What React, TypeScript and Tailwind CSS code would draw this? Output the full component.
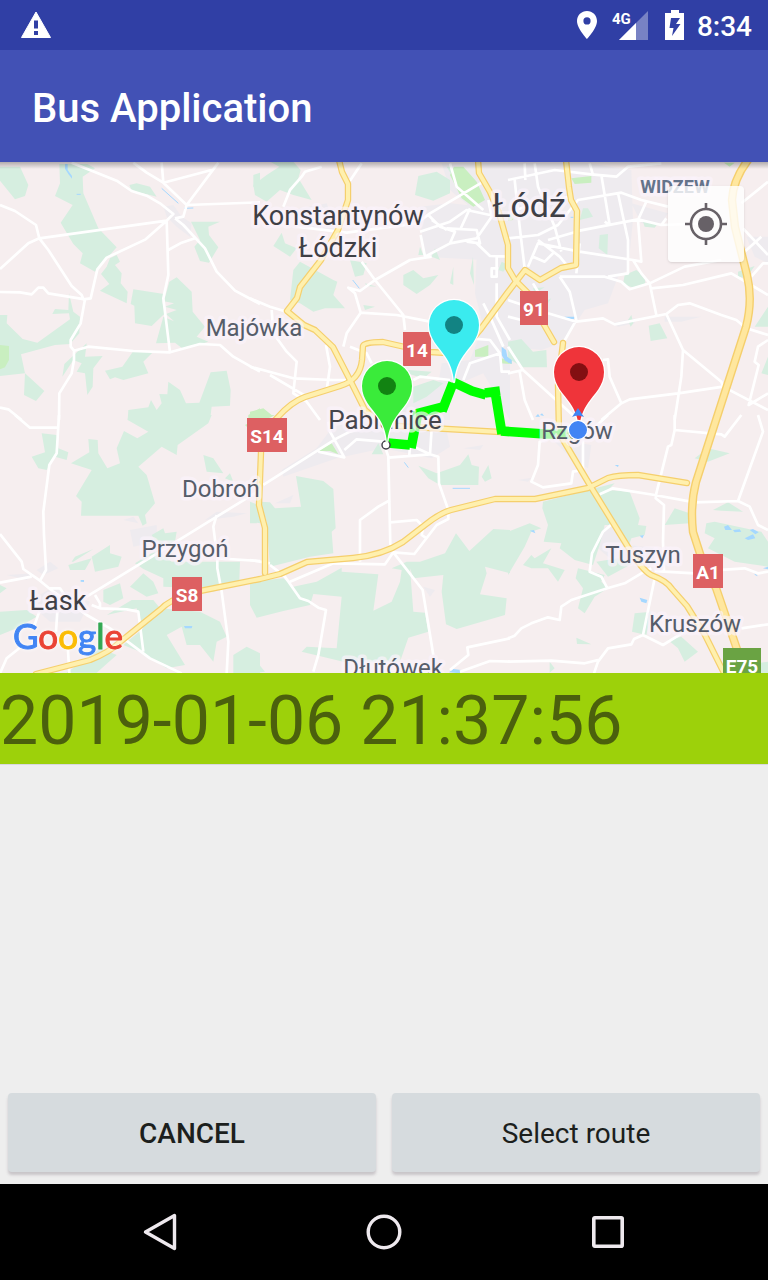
import React from "react";

type Tile = {
  x: number;
  y: number;
  urban: string;
  forest: string;
  park: string;
  lake: string;
  stream: string;
  street: string;
};

// Every tile is drawn in its own 780-unit square, three units to a map pixel.
const tiles: Tile[] = [
  {
    x: 0,
    y: 160,
    urban: "M490,140 520,135 545,170 575,190 570,230 530,200 500,170Z",
    forest:
      "M0,20 60,20 85,75 75,108 45,118 0,62Z M178,12 262,12 285,25 248,50 250,100 295,205 350,262 285,335 240,310 248,280 220,252 182,188 218,135 165,108 180,70Z M350,285 360,305 345,315 365,340 362,370 383,395 380,430 300,392 328,372 303,342 320,320 330,295Z M388,75 410,70 450,80 470,110 450,105 395,92Z M573,185 660,185 625,200 627,225 655,262 627,308 600,303 583,260 600,240Z M400,388 492,402 487,425 495,460 455,498 405,490 403,437 392,432Z M508,365 530,352 575,395 578,455 615,500 590,530 625,545 550,568 525,548 468,550 490,470 522,484 498,462 530,450 495,440 522,430 492,424Z M0,465 22,465 20,490 68,537 112,548 210,478 207,460 157,462 165,447 205,450 207,400 220,455 240,470 238,520 210,552 165,555 63,583 75,640 0,648Z M75,640 133,693 108,723 72,705Z M187,650 193,612 260,550 255,590 308,588 280,625 278,680 262,705 255,640 230,635 245,610 220,600Z M400,573 460,575 430,605 445,640 370,660 345,652 330,658 315,632 367,620Z M632,637 680,632 692,690 690,737 635,740 632,765 600,780 383,780 385,750 445,742 453,720 470,750 485,730 478,702 502,703 505,665 540,690 558,730 598,728Z M760,45 780,38 780,95 760,80Z",
    park: "M0,555 27,558 27,600 15,622 0,628Z M745,765 780,745 780,780 745,780Z",
    lake: "M195,12 203,12 203,30 216,48 216,56 205,42 195,26Z",
    stream: "M485,85 535,130 M230,103 242,103 M552,145 580,144",
    street:
      "M215,8 350,62 395,93 440,107 480,130 520,162 500,182 437,238 320,293 292,328 272,415 250,418 245,405 215,378 145,270 118,235 108,195 45,153 0,135 M0,327 85,250 118,235 500,182 505,345 490,415 510,577 400,573 265,560 222,572 212,560 212,540 242,490 255,418 145,400 130,383 115,383 95,403 60,397 0,396 M525,175 550,195 615,265 650,335 705,392 780,432 M505,270 545,248 585,235 M525,175 550,170 560,135 780,127 M560,135 490,68 485,8 M490,68 440,38 400,8 M490,68 635,30 M560,135 655,8 M510,577 600,552 660,555 700,590 780,635 M222,572 222,600 215,640 178,700 177,780 M0,743 25,748 65,780",
  },
  {
    x: 250,
    y: 160,
    urban:
      "M130,150 230,130 260,215 160,205Z M510,140 600,130 700,140 780,300 700,300 520,290Z M575,10 780,10 780,300 700,150 660,140 600,90Z M680,290 780,250 780,780 700,640 560,700 575,610 660,600 700,500 675,400Z M360,730 600,660 600,780 360,780Z",
    forest:
      "M10,75 50,45 88,20 60,5 130,5 152,30 145,55 185,120 130,105 90,90 50,125 15,105Z M505,48 560,35 600,60 600,100 550,122 495,105Z M95,218 105,250 140,265 120,290 70,258Z M150,305 250,360 262,365 250,405 285,445 225,445 190,455 150,430 120,420 130,330Z M300,300 350,310 340,345 315,350Z M460,345 490,330 520,355 565,345 540,375 500,402 460,375Z M340,435 375,440 345,450Z M510,260 520,285 505,285Z M555,265 570,300 545,290Z M610,320 610,375 600,370Z M669,290 672,375 660,340Z M475,630 545,635 520,655 470,640Z M490,680 550,660 580,670 530,710 490,730Z M755,305 775,315 760,335 745,330Z M345,370 380,380 350,378Z M590,20 602,20 605,45Z",
    park: "M600,45 612,20 640,20 680,65 705,120 670,140 635,115Z M675,570 715,555 715,590 675,590Z M750,595 785,600 785,612 750,610Z M0,755 40,745 65,765 50,780 0,780Z",
    lake: "M755,560 768,570 772,590 785,600 785,612 765,602 755,585Z",
    stream: "M308,360 328,385",
    street:
      "M215,20 165,35 155,50 120,90 100,140 M335,10 300,62 M140,200 290,218 500,190 540,160 700,65 M510,215 600,185 650,150 720,165 M512,225 525,290 600,250 680,235 725,170 715,120 M535,165 570,200 615,215 600,250 M590,205 680,210 690,250 650,245 M545,180 590,210 M660,145 630,210 M680,250 720,288 780,290 M545,290 480,300 375,360 330,393 295,383 315,400 332,458 290,520 280,560 M335,305 375,360 460,465 465,510 M330,458 440,465 540,485 M0,415 60,440 110,455 M65,450 70,520 110,575 140,605 130,700 170,725 210,780 M0,620 130,655 250,660 300,660 M60,645 170,710 M228,555 240,620 230,690 M300,560 350,580 365,610 M490,660 510,650 600,660 M640,660 660,610 750,580 720,540 660,535 M740,290 740,350 725,350 725,325 745,325 M600,10 620,80 700,150 M700,430 720,470 760,560 M750,580 755,635 780,635 M740,370 740,470 780,540",
  },
  {
    x: 508,
    y: 160,
    urban:
      "M0,8 230,8 370,30 375,180 360,330 330,350 300,430 230,450 210,480 170,545 100,570 0,560Z M470,470 580,470 520,485 470,485Z M370,130 480,160 460,190 400,190Z M310,490 380,475 380,490 330,500Z M715,230 780,230 780,310 740,290Z",
    forest:
      "M225,145 240,145 255,170 215,180Z M275,225 300,222 298,285 272,265Z M350,345 385,330 410,350 412,370 380,385 345,372Z M422,497 455,490 478,535 428,543Z M0,545 40,537 75,575 115,570 117,622 45,622 0,595Z M740,500 780,440 780,500Z M690,335 740,318 715,355 690,350Z M405,185 450,190 440,203 410,200Z M360,480 370,465 376,490 368,500Z M760,640 780,590 780,645Z M75,385 110,382 80,400Z M100,430 130,415 120,430Z",
    park: "M190,55 250,48 250,68 200,72Z M648,8 680,8 665,20Z M0,155 18,160 15,180 0,182Z",
    lake: "M170,470 200,470 198,477 172,477Z M0,597 8,605 0,609Z M82,770 90,762 96,770Z M96,765 102,760 108,768Z",
    stream: "M188,172 196,172",
    street:
      "M20,60 35,200 50,325 M50,10 52,60 M80,10 90,80 140,200 160,275 M0,60 140,30 250,43 325,50 360,20 460,10 M0,235 90,225 150,195 210,120 340,98 400,120 480,140 M0,160 90,125 190,110 M120,240 215,212 390,178 460,195 600,190 M60,320 90,250 215,275 375,300 400,305 390,180 415,125 M245,10 255,45 M280,45 305,195 290,185 M330,100 360,240 360,340 300,350 M90,240 155,290 180,320 M75,290 110,305 140,275 M155,350 290,350 340,365 365,388 425,370 530,320 640,300 M155,350 185,395 205,480 165,550 M205,340 215,250 M0,420 60,440 M0,470 40,480 M120,460 205,485 285,475 320,493 475,462 510,435 545,430 640,465 685,480 715,505 780,525 M375,300 400,340 425,370 445,465 M430,385 525,375 670,340 780,405 M475,462 525,570 640,665 645,680 510,700 365,718 340,730 280,780 M645,680 780,750 M525,570 520,650 500,780 M340,730 305,650 300,598 285,600 M0,560 45,630 200,770 M45,630 0,640 M35,635 50,720 75,780 M700,130 780,65 M460,195 475,175 M705,205 780,285 M705,280 760,230 M780,310 765,310 730,350 M780,540 750,560 740,605 752,615 722,735 780,700 M75,370 105,420",
  },
  {
    x: 0,
    y: 415,
    urban:
      "M85,560 160,515 270,560 240,620 150,620Z M370,315 400,305 415,325Z M390,345 470,330 470,380 400,395Z M615,315 650,290 740,295 700,305Z M110,465 150,440 175,460 130,480Z M20,480 100,475 80,495Z",
    forest:
      "M385,0 635,0 625,25 533,90 530,120 485,95 415,155 440,180 465,265 435,300 440,325 428,332 415,302 243,302 245,260 228,243 275,165 213,145 268,112 265,72 293,75 295,115 322,160 360,145 350,100 372,48 412,70 445,50 383,15Z M125,55 170,60 175,100 205,112 200,135 165,125 140,165 115,160 95,125 135,112Z M610,120 640,130 670,175 620,170Z M675,190 690,175 700,200Z M780,255 750,320 780,325Z M215,440 225,425 280,402 220,440Z M205,450 275,430 255,465 210,465Z M275,425 330,390 330,415 365,425 355,455 285,470Z M405,445 470,405 515,440 720,440 718,495 640,530 600,520 490,515 490,490 430,462Z M430,475 460,500 475,535 440,545 390,515Z M310,525 360,505 370,550 330,570 310,560Z M395,555 460,555 480,580 600,590 660,620 680,665 650,680 640,740 600,690 560,690 545,635 500,660 555,750 500,760 420,710 370,690 430,640 410,580 320,600Z M0,590 80,585 110,605 50,640 0,660Z M700,720 740,695 780,715 780,775 700,775Z M0,510 20,520 0,535Z M455,360 490,340 495,355 530,350 525,380 480,400Z M300,700 350,720 290,773 200,773 260,730Z",
    park: "M735,30 745,25 745,40Z M765,0 780,0 780,10Z",
    lake: "M242,495 252,495 252,501 242,500Z M552,633 577,633 575,640 555,640Z",
    stream: "",
    street:
      "M177,0 170,115 148,150 130,290 132,360 138,465 120,497 M45,0 90,38 175,38 M0,357 65,440 70,462 120,497 160,530 260,600 330,640 450,730 545,775 M0,503 95,485 M260,545 480,410 720,262 780,225 M275,570 300,580 380,583 415,590 430,710 M650,300 640,335 652,430 652,460 665,530 685,680 680,775 M652,430 780,438 M285,540 300,565 300,580 M172,590 168,650 M118,590 100,640 M0,775 20,730 70,690 M203,690 208,775 M150,520 180,520 200,550",
  },
  {
    x: 250,
    y: 415,
    urban:
      "M260,20 580,0 600,95 545,130 400,100 260,130 100,185 95,165 200,100Z M520,515 555,525 540,545Z M640,100 700,90 690,105Z M75,265 130,240 120,265Z",
    forest:
      "M138,183 220,198 250,222 257,340 245,350 250,415 180,425 60,455 50,320 30,260 60,262 75,280 153,275Z M0,500 100,490 130,515 200,500 275,458 275,470 385,478 370,587 425,560 450,500 455,465 425,460 470,440 510,440 585,415 618,355 658,408 730,342 780,345 780,475 705,455 710,475 690,538 770,550 765,600 620,642 588,628 575,530 580,480 490,490 480,460 490,590 525,593 535,650 475,668 450,740 280,740 155,710 170,695 260,700 275,545 190,537 180,570 100,588 20,608 0,570Z M505,152 560,175 630,150 655,118 665,150 687,155 685,210 570,210 535,190Z M695,185 715,150 725,190 705,200Z M385,85 400,118 365,118Z M0,260 25,270 20,325 0,325Z M0,715 45,770 0,775Z",
    park: "M205,108 245,85 265,118 240,108Z M0,0 75,0 60,8 0,8Z",
    lake: "M597,772 610,762 633,765 630,775Z",
    stream: "M463,142 475,158 M608,220 660,220",
    street:
      "M40,210 260,70 300,50 380,30 M205,110 283,127 240,50 235,20 M283,105 320,73 400,80 415,125 421,390 M415,128 540,118 565,125 567,205 595,285 595,312 560,330 493,417 430,412 M540,118 545,40 M478,120 480,90 540,118 M421,255 385,275 330,315 330,440 M421,322 500,315 520,335 515,360 530,370 M120,500 250,445 405,448 430,412 518,525 550,720 M0,435 60,445 M60,450 105,485 150,550 175,558 205,578 228,585 205,720 190,770 M780,670 652,697 655,720 600,765 M630,770 720,738 780,740",
  },
  {
    x: 508,
    y: 415,
    urban:
      "M280,340 320,330 360,390 450,400 440,450 330,450 270,400Z M130,70 250,90 240,160 200,140Z M30,195 70,188 60,200Z",
    forest:
      "M105,260 240,225 320,205 300,225 365,230 395,310 390,330 415,333 410,360 370,370 360,400 330,330 290,330 275,390 255,450 200,435 155,400 160,385 107,380 120,330 103,280Z M265,440 330,430 375,445 300,485Z M210,460 290,480 280,500 300,520 260,545 230,595 210,580 225,520 203,490Z M0,350 65,325 100,340 70,350 50,395 0,480Z M600,100 665,115 600,140 560,130Z M470,330 500,280 545,295 560,300 545,325Z M595,325 620,320 760,350 780,380 780,455 680,440 600,400 620,370 590,355Z M615,285 660,262 705,290 640,287Z M380,595 430,590 415,660 372,650Z M480,675 520,665 570,710 530,740 510,700Z M205,668 250,688 207,687Z M125,740 140,760 125,773Z M45,450 70,420 80,430 130,400 105,445 170,465 150,500 120,460 70,460Z M745,745 780,740 780,775 745,775Z",
    park: "",
    lake: "M648,335 660,330 672,345 652,345Z M675,345 695,343 700,350 680,352Z M725,345 735,342 752,352 742,358Z M710,370 735,358 742,370 720,375Z M65,347 78,345 82,355Z M395,548 418,555 415,565 400,560Z M395,362 408,360 403,370Z M320,150 332,150 330,156Z M765,460 780,455 780,463Z",
    stream: "M740,478 748,482",
    street:
      "M500,0 500,45 490,90 480,95 445,235 443,250 468,270 465,380 468,470 560,475 M440,468 468,470 M560,470 710,460 750,475 780,470 M275,238 315,220 440,240 560,262 690,258 725,275 750,330 780,345 M750,0 765,50 690,258 M500,45 640,58 650,65 700,0 M315,325 285,350 252,415 245,470 280,485 298,520 350,505 400,475 430,460 M298,520 190,555 160,575 155,615 120,607 70,625 40,640 20,662 0,670 M440,490 405,660 465,690 530,650 M405,660 378,672 370,688 300,700 270,740 M270,735 230,745 130,737 0,740 M270,740 258,775 M700,640 780,628 M155,60 95,80 90,150 70,200 105,217 190,205 195,170 225,165 225,70 300,0",
  },
];

const mainRoads = [
  "M339,160 L342,172 L348,184 L348,200 L338,230 L321,260 L300,287 L297,298 L287,311 L304,325 L315,330 L333,347 L350,380 L365,410 L383,425 L430,428 L500,432 L558,434",
  "M265,573 V528 L259,505 L261,452 Q264,430 277,418 Q291,402 305,397 L340,386 Q360,380 362,360 L363,346 Q364,342 383,342 L405,347 L430,352 L447,353",
  "M478,160 L479,173 L490,192 L499,213 L508,245 V268 L515,280 L530,295 L543,323 L554,342",
  "M566,160 L569,187 L571,200 L577,211 L576,265 L561,268 L540,280 L525,270 L508,292 L480,330 L465,348",
  "M563,343 L558,385 L559,433 L591,487 L628,547 Q642,570 651,575 Q667,581 672,589 L687,606 L705,635 L725,675",
  "M36,674 L90,660 Q110,652 120,642 L161,609 Q168,601 190,593 L260,579 L280,574 L307,562 L353,558 Q383,555 403,542 L425,525 Q440,513 451,510 L495,499 L535,499 L588,488 L608,478 Q618,475 638,475 L687,483",
];

const motorway =
  "M748,160 Q733,180 732,200 L735,227 L747,275 Q753,300 746,327 L716,420 L696,482 Q690,505 693,532 L703,563 L716,588 L740,658";

const places = [
  { name: "Konstantynów", x: 338, y: 225, cls: "fill-[#3f3f46] text-[27px]" },
  { name: "Łódzki", x: 338, y: 257, cls: "fill-[#3f3f46] text-[27px]" },
  { name: "Łódź", x: 529, y: 217, cls: "fill-[#3f3f46] text-[34px]" },
  { name: "Pabianice", x: 385, y: 429, cls: "fill-[#45454c] text-[26px]" },
  { name: "Łask", x: 58, y: 610, cls: "fill-[#3f3f46] text-[27px]" },
  { name: "Majówka", x: 254, y: 336, cls: "fill-[#565d6a] text-[24px]" },
  { name: "Rzgów", x: 577, y: 439, cls: "fill-[#565d6a] text-[24px]" },
  { name: "Dobroń", x: 221, y: 497, cls: "fill-[#565d6a] text-[24px]" },
  { name: "Przygoń", x: 185, y: 557, cls: "fill-[#565d6a] text-[24px]" },
  { name: "Tuszyn", x: 643, y: 563, cls: "fill-[#565d6a] text-[24px]" },
  { name: "Kruszów", x: 695, y: 632, cls: "fill-[#565d6a] text-[24px]" },
  { name: "Dłutówek", x: 393, y: 676, cls: "fill-[#565d6a] text-[24px]" },
  { name: "WIDZEW", x: 675, y: 193, cls: "fill-[#64748b] text-[18px] font-bold" },
];

const shields = [
  { name: "14", x: 403, y: 332, w: 28, fill: "#dd6062" },
  { name: "91", x: 520, y: 291, w: 28, fill: "#dd6062" },
  { name: "S14", x: 247, y: 418, w: 40, fill: "#dd6062" },
  { name: "S8", x: 172, y: 577, w: 30, fill: "#dd6062" },
  { name: "A1", x: 693, y: 554, w: 30, fill: "#dd6062" },
  { name: "E75", x: 723, y: 648, w: 38, fill: "#6aa343" },
];

const pins = [
  { x: 454, y: 325, fill: "#3aebef", dot: "#128383" },
  { x: 387, y: 386, fill: "#3aeb3a", dot: "#128312" },
  { x: 579, y: 372, fill: "#ef343a", dot: "#830f12" },
];

function Layer({ part, fill, stroke, width }: { part: "urban" | "forest" | "park" | "lake" | "stream" | "street"; fill?: string; stroke?: string; width?: number }) {
  return (
    <g fill={fill ?? "none"} stroke={stroke} strokeWidth={width} strokeLinejoin="round">
      {tiles.map((t) => (
        <path key={`${t.x}-${t.y}`} transform={`translate(${t.x} ${t.y}) scale(0.33333)`} d={t[part]} />
      ))}
    </g>
  );
}

function RouteMap() {
  return (
    <svg viewBox="0 162 768 511" preserveAspectRatio="xMidYMid slice" className="block h-full w-full" role="img" aria-label="Bus route map">
      <defs>
        <linearGradient id="barShadow" x1="0" y1="0" x2="0" y2="1">
          <stop offset="0" stopColor="#000" stopOpacity="0.28" />
          <stop offset="1" stopColor="#000" stopOpacity="0" />
        </linearGradient>
      </defs>
      <rect x="0" y="162" width="768" height="511" fill="#f6eeef" />
      <Layer part="urban" fill="#eeebef" />
      <Layer part="forest" fill="#d6eee0" />
      <Layer part="park" fill="#c9efc0" />
      <Layer part="lake" fill="#a5d8ff" />
      <Layer part="stream" stroke="#a5d8ff" width={3} />
      <Layer part="street" stroke="#ffffff" width={8} />

      <g fill="none" strokeLinejoin="round" strokeLinecap="round">
        {mainRoads.map((d) => (
          <path key={d} d={d} stroke="#f5cf6d" strokeWidth="6.4" />
        ))}
        <path d={motorway} stroke="#f5cf6d" strokeWidth="8.4" />
        {mainRoads.map((d) => (
          <path key={d} d={d} stroke="#fff0ae" strokeWidth="4" />
        ))}
        <path d={motorway} stroke="#ffe79e" strokeWidth="5.6" />
      </g>

      <path
        d="M388,443 L410,445 M411,448 L418,412 M416,414 L443,407 M442,411 L453,383 M453,382 L472,391 L486,395 M485,393 L500,391 M495,391 L502,434 M501,431 L545,434 L577,434"
        fill="none"
        stroke="#00ff00"
        strokeWidth="9.6"
        strokeLinejoin="bevel"
      />
      <circle cx="386" cy="445" r="4" fill="#fff" stroke="#3f3f46" strokeWidth="1.4" />

      <g className="font-[Roboto,sans-serif]" textAnchor="middle" stroke="#fbf3fc" strokeWidth="7" strokeOpacity="0.7" strokeLinejoin="round" paintOrder="stroke">
        {places.map((p) => (
          <text key={p.name} x={p.x} y={p.y} className={p.cls}>
            {p.name}
          </text>
        ))}
      </g>

      <g className="font-[Roboto,sans-serif] text-[19px] font-bold" textAnchor="middle">
        {shields.map((s) => (
          <g key={s.name}>
            <rect x={s.x} y={s.y} width={s.w} height="34" fill={s.fill} />
            <text x={s.x + s.w / 2} y={s.y + 25} fill="#fff">
              {s.name}
            </text>
          </g>
        ))}
      </g>

      {pins.map((p) => (
        <g key={p.fill} transform={`translate(${p.x} ${p.y})`}>
          <path d="M0,57 C-1,46 -4,38 -9,31 C-15,22 -25,14 -25,0 A25,25 0 0 1 25,0 C25,14 15,22 9,31 C4,38 1,46 0,57Z" fill={p.fill} stroke="#fff" strokeWidth="2.4" strokeLinejoin="round" paintOrder="stroke" />
          <circle r="9" fill={p.dot} />
        </g>
      ))}
      <path d="M578,408 L584,417 Q578,414 572,417Z" fill="#4285f4" />
      <circle cx="578" cy="430" r="9.6" fill="#4285f4" stroke="#fff" strokeWidth="1.2" />

      <text x="13" y="649" className="font-[Lato,sans-serif] text-[35px] drop-shadow-[0_0_2px_#ffffff]" strokeWidth="1" strokeLinejoin="round">
        <tspan fill="#4285f4" stroke="#4285f4">G</tspan>
        <tspan fill="#ea4335" stroke="#ea4335">o</tspan>
        <tspan fill="#fbbc05" stroke="#fbbc05">o</tspan>
        <tspan fill="#4285f4" stroke="#4285f4">g</tspan>
        <tspan fill="#34a853" stroke="#34a853">l</tspan>
        <tspan fill="#ea4335" stroke="#ea4335">e</tspan>
      </text>
      <rect x="0" y="162" width="768" height="7" fill="url(#barShadow)" />
    </svg>
  );
}

function StatusBar() {
  return (
    <div className="flex h-[50px] items-center bg-[#303fa5] pr-4 pl-5 text-white">
      <svg width="32" height="28" viewBox="0 0 32 28" aria-hidden="true">
        <path fill="#fff" stroke="#fff" strokeWidth="1" strokeLinejoin="round" d="M16,1 30.5,26.5H1.5Z" />
        <path fill="#303fa5" d="M14,9.500h4v8h-4zM14,20h4v4h-4z" />
      </svg>
      <div className="ml-auto flex items-center">
        <svg width="20" height="30" viewBox="0 0 20 30" aria-hidden="true">
          <path fillRule="evenodd" fill="#fff" d="M10,1C4.500,1 0,5.300 0,11C0,18.500 10,29 10,29S20,18.500 20,11C20,5.300 15.500,1 10,1ZM10,7.300A3.600,3.600 0 1 1 10,14.500A3.600,3.600 0 1 1 10,7.300Z" />
        </svg>
        <svg width="37" height="32" viewBox="0 0 37 32" className="ml-[15px] font-[Roboto,sans-serif] text-[15px] font-bold" aria-label="4G signal">
          <path fill="#fff" fillOpacity="0.35" d="M36,2V31H7Z" />
          <path fill="#fff" d="M24,14V31H7Z" />
          <text x="0" y="15" fill="#fff">
            4G
          </text>
        </svg>
        <svg width="20" height="30" viewBox="0 0 20 30" className="ml-4" aria-hidden="true">
          <path fillRule="evenodd" fill="#fff" d="M6,0H14V3H19V30H0V3H6ZM6,8 4.500,18H8.500L7,26 15.500,14H11L15,8Z" />
        </svg>
        <span className="ml-3 pt-1 text-[28px] leading-8 font-medium">8:34</span>
      </div>
    </div>
  );
}

export default function App() {
  return (
    <div className="flex min-h-screen flex-col bg-[#eeeeee] font-[Roboto,sans-serif]">
      <StatusBar />
      <header className="flex h-28 items-center bg-[#4251b5] px-8 pt-1.5">
        <h1 className="text-[40px] leading-[48px] font-medium text-white">Bus Application</h1>
      </header>
      <main className="flex flex-1 flex-col">
        <div className="relative h-[511px] overflow-hidden">
          <RouteMap />
          <button type="button" aria-label="My location" className="absolute top-6 right-6 flex h-[76px] w-[76px] items-center justify-center rounded-sm bg-white/80 shadow-sm">
            <svg width="42" height="42" viewBox="0 0 42 42" fill="none" stroke="#676167" strokeWidth="2.600" aria-hidden="true">
              <circle cx="21" cy="21" r="15" />
              <circle cx="21" cy="21" r="8" fill="#676167" stroke="none" />
              <path d="M21,0V6M21,36V42M0,21H6M36,21H42" />
            </svg>
          </button>
        </div>
        <p className="h-[92px] border-b border-[#d8d8de] bg-[#9dd10a] pt-[5px] text-[68px] leading-[86px] whitespace-nowrap text-[#4b600d]">2019-01-06 21:37:56</p>
        <div className="mt-auto grid grid-cols-2 gap-4 px-2 pb-3 text-[28px] text-[#1c1f1d]">
          <button type="button" className="h-[79px] rounded-sm bg-[#d6dbde] pt-0.5 font-medium shadow-[0_3px_3px_#c8c4c8]">
            CANCEL
          </button>
          <button type="button" className="h-[79px] rounded-sm bg-[#d6dbde] pt-0.5 shadow-[0_3px_3px_#c8c4c8]">
            Select route
          </button>
        </div>
      </main>
      <nav className="grid h-24 grid-cols-3 bg-black px-12" aria-label="System">
        <button type="button" aria-label="Back" className="flex items-center justify-center">
          <svg width="36" height="40" viewBox="0 0 36 40" fill="none" stroke="#eee9ee" strokeWidth="3.400" strokeLinejoin="round">
            <path d="M32.500,3.500V36.500L3.500,20Z" />
          </svg>
        </button>
        <button type="button" aria-label="Home" className="flex items-center justify-center">
          <svg width="36" height="36" viewBox="0 0 36 36" fill="none" stroke="#eee9ee" strokeWidth="3.400">
            <circle cx="18" cy="18" r="15.800" />
          </svg>
        </button>
        <button type="button" aria-label="Recent apps" className="flex items-center justify-center">
          <svg width="32" height="32" viewBox="0 0 32 32" fill="none" stroke="#eee9ee" strokeWidth="3.600">
            <rect x="1.800" y="1.800" width="28.400" height="28.400" rx="1" />
          </svg>
        </button>
      </nav>
    </div>
  );
}
